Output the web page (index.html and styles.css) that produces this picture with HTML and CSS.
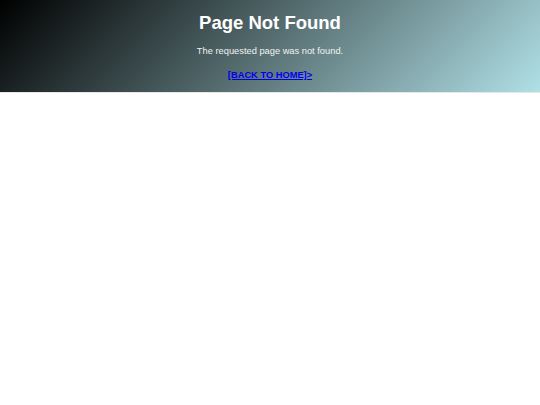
FILE: index.html
```html
<!DOCTYPE html>
<html lang="en">
<head>
  <meta charset="UTF-8">
  <title>Page Not Found</title>
  <link rel="stylesheet" href="styles.css">
</head>
<body>
  <header class="error-header">
    <h1 class="error-title">Page Not Found</h1>
    <p class="error-message">The requested page was not found.</p>
    <p class="error-back"><a class="home-link" href="#">[BACK TO HOME]&gt;</a></p>
  </header>
</body>
</html>
```

FILE: styles.css
```css
* {
  margin: 0;
  padding: 0;
  box-sizing: border-box;
}

body {
  font-family: "Liberation Sans", Arial, sans-serif;
  background: #ffffff;
}

.error-header {
  height: 93px;
  background: linear-gradient(135deg, #000000 0%, #b0e0e6 100%);
  text-align: center;
  padding-top: 12px;
  border-bottom: 1px solid #e8e8e8;
}

.error-title {
  font-size: 18.5px;
  font-weight: 700;
  color: #ffffff;
  line-height: 22px;
  margin-bottom: 11px;
}

.error-message {
  font-size: 9.3px;
  color: #f2f2f2;
  line-height: 12px;
  margin-bottom: 12px;
}

.error-back {
  font-size: 9.3px;
  line-height: 12px;
}

.home-link {
  font-weight: 700;
  color: #0000ee;
}
```
